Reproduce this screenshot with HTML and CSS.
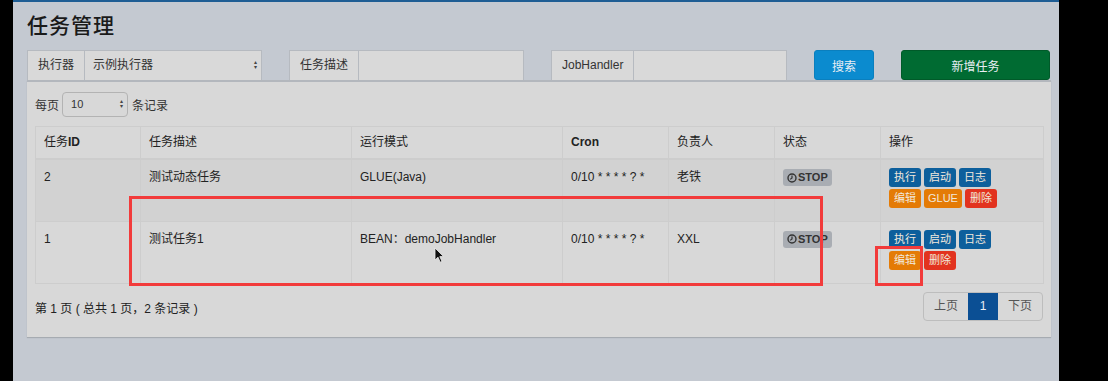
FILE: index.html
```html
<!DOCTYPE html>
<html lang="zh-CN">
<head>
  <meta charset="UTF-8">
  <title>任务管理</title>
  <link rel="stylesheet" href="styles.css">
</head>
<body>
  <div class="side"></div>

  <div class="page">
    <h1 class="page-title">任务管理</h1>

    <div class="filters">
      <div class="input-group">
        <span class="addon">执行器</span>
        <div class="select">示例执行器<span class="caret">&#9652;<br>&#9662;</span></div>
      </div>
      <div class="input-group">
        <span class="addon">任务描述</span>
        <div class="input"></div>
      </div>
      <div class="input-group">
        <span class="addon">JobHandler</span>
        <div class="input"></div>
      </div>
      <button class="btn btn-search">搜索</button>
      <button class="btn btn-add">新增任务</button>
    </div>

    <div class="box">
      <div class="length">
        每页
        <div class="select small">10<span class="caret">&#9652;<br>&#9662;</span></div>
        条记录
      </div>

      <table class="jobs">
        <colgroup>
          <col style="width:105px">
          <col style="width:211px">
          <col style="width:211px">
          <col style="width:106px">
          <col style="width:106px">
          <col style="width:106px">
          <col style="width:163px">
        </colgroup>
        <thead>
          <tr>
            <th>任务<b>ID</b></th>
            <th>任务描述</th>
            <th>运行模式</th>
            <th><b>Cron</b></th>
            <th>负责人</th>
            <th>状态</th>
            <th>操作</th>
          </tr>
        </thead>
        <tbody>
          <tr class="odd">
            <td>2</td>
            <td>测试动态任务</td>
            <td>GLUE(Java)</td>
            <td>0/10 * * * * ? *</td>
            <td>老铁</td>
            <td><span class="label-stop"><svg width="10" height="10" viewBox="0 0 10 10"><circle cx="5" cy="5" r="4" fill="none" stroke="#333" stroke-width="1.4"/><path d="M5 2.6V5L3.2 6.4" fill="none" stroke="#333" stroke-width="1.2"/></svg>STOP</span></td>
            <td>
              <div class="ops">
                <span class="op blue">执行</span><span class="op blue">启动</span><span class="op blue">日志</span>
                <span class="op orange">编辑</span><span class="op orange">GLUE</span><span class="op red">删除</span>
              </div>
            </td>
          </tr>
          <tr>
            <td>1</td>
            <td>测试任务1</td>
            <td>BEAN：demoJobHandler</td>
            <td>0/10 * * * * ? *</td>
            <td>XXL</td>
            <td><span class="label-stop"><svg width="10" height="10" viewBox="0 0 10 10"><circle cx="5" cy="5" r="4" fill="none" stroke="#333" stroke-width="1.4"/><path d="M5 2.6V5L3.2 6.4" fill="none" stroke="#333" stroke-width="1.2"/></svg>STOP</span></td>
            <td>
              <div class="ops">
                <span class="op blue">执行</span><span class="op blue">启动</span><span class="op blue">日志</span>
                <span class="op orange">编辑</span><span class="op red">删除</span>
              </div>
            </td>
          </tr>
        </tbody>
      </table>

      <div class="table-footer">
        <div class="info">第 1 页 ( 总共 1 页，2 条记录 )</div>
        <div class="pager">
          <span class="pg">上页</span><span class="pg active">1</span><span class="pg">下页</span>
        </div>
      </div>
    </div>
  </div>

  <div class="side"></div>

  <!-- annotation marks drawn over the screenshot -->
  <div class="mark mark-row"></div>
  <div class="mark mark-btn"></div>
  <svg class="cursor" width="11" height="17" viewBox="0 0 11 17">
    <path d="M1 1V13L4 10.2L6.2 15.2L8 14.4L5.8 9.6H9.6Z" fill="#111" stroke="#eee" stroke-width="0.8"/>
  </svg>
</body>
</html>
```

FILE: styles.css
```css
body {
  margin: 0;
  position: relative;
  display: flex;
  height: 381px;
  background-color: #000;
  font-family: "Liberation Sans", "Noto Sans CJK SC", sans-serif;
  font-size: 12px;
  color: #222;
  overflow: hidden;
}

.side {
  width: 13px;
  background-color: #000;
}

.side:last-of-type {
  flex: 1;
}

.page {
  width: 1046px;
  background-color: #c4c9d1;
  border-top: 2px solid #1e5d94;
  padding: 0 8px 0 14px;
  box-sizing: border-box;
}

.page-title {
  margin: 10px 0 0;
  height: 38px;
  font-size: 21px;
  font-weight: 500;
  line-height: 28px;
  color: #1a1a1a;
  letter-spacing: 1px;
}

.filters {
  display: grid;
  grid-template-columns: 235px 235px 236px 60px 149px;
  column-gap: 27px;
  height: 30px;
}

.input-group {
  display: flex;
  border: 1px solid #b6bac0;
  border-bottom: none;
  background-color: #d9d9d9;
}

.addon {
  padding: 0 10px;
  line-height: 29px;
  color: #333;
  border-right: 1px solid #b6bac0;
  white-space: nowrap;
}

.input {
  flex: 1;
}

.select {
  flex: 1;
  position: relative;
  padding-left: 8px;
  line-height: 29px;
  color: #333;
  border-radius: 0 4px 0 0;
}

.caret {
  position: absolute;
  right: 4px;
  top: 9px;
  font-size: 6px;
  line-height: 5px;
  color: #444;
}

.btn {
  border: 1px solid transparent;
  border-radius: 3px;
  font-family: inherit;
  font-size: 12px;
  color: #e8eef4;
  padding: 0;
}

.btn-search {
  background-color: #0b8bcf;
  border-color: #0a7fbe;
}

.btn-add {
  background-color: #006b32;
  border-color: #005a29;
}

.box {
  background-color: #d8d8d8;
  border-top: 2px solid #b3b7bd;
  padding: 0 8px;
  height: 257px;
  box-sizing: border-box;
  box-shadow: 0 1px 1px rgba(0, 0, 0, 0.15);
}

.length {
  display: flex;
  align-items: center;
  height: 44px;
  color: #333;
}

.select.small {
  flex: none;
  width: 56px;
  height: 23px;
  margin: 0 4px 0 3px;
  line-height: 23px;
  border: 1px solid #b3b3b3;
  border-radius: 4px;
  font-size: 11px;
}

.select.small .caret {
  top: 6px;
}

.jobs {
  width: 1008px;
  border-collapse: collapse;
  table-layout: fixed;
}

.jobs th,
.jobs td {
  border: 1px solid #cdcdcd;
  padding: 0 8px;
  text-align: left;
  vertical-align: top;
}

.jobs th {
  height: 31px;
  line-height: 31px;
  font-weight: normal;
  border-bottom-width: 2px;
}

.jobs td {
  height: 62px;
  padding-top: 10px;
  box-sizing: border-box;
  line-height: 15px;
}

.jobs tr.odd td {
  background-color: #d2d2d2;
}

.label-stop {
  display: inline-flex;
  align-items: center;
  gap: 1px;
  padding: 1px 4px;
  margin-top: -1px;
  background-color: #a9adb3;
  border-radius: 3px;
  font-size: 11px;
  font-weight: bold;
  color: #333;
}

.jobs td:last-child {
  padding-top: 8px;
}

.ops {
  display: flex;
  flex-wrap: wrap;
  gap: 2px 3px;
  width: 115px;
}

.op {
  display: inline-block;
  min-width: 24px;
  padding: 0 4px;
  height: 19px;
  line-height: 19px;
  text-align: center;
  border-radius: 3px;
  font-size: 11px;
  color: #f1e8dc;
}

.op.blue {
  background-color: #0d5f9c;
}

.op.orange {
  background-color: #e47b06;
}

.op.red {
  background-color: #e2331f;
}

.table-footer {
  display: flex;
  justify-content: space-between;
  align-items: flex-start;
  padding-top: 8px;
}

.info {
  margin-top: 7px;
  color: #222;
}

.pager {
  display: flex;
  border: 1px solid #bdbdbd;
  border-radius: 4px;
  overflow: hidden;
}

.pg {
  width: 44px;
  height: 27px;
  line-height: 27px;
  text-align: center;
  color: #555;
}

.pg.active {
  width: 30px;
  background-color: #0b4f94;
  color: #e8eef4;
}

.mark {
  position: absolute;
  border: 3px solid #f23b3b;
  box-sizing: border-box;
}

.mark-row {
  left: 129px;
  top: 196px;
  width: 694px;
  height: 90px;
}

.mark-btn {
  left: 875px;
  top: 246px;
  width: 48px;
  height: 40px;
}

.cursor {
  position: absolute;
  left: 434px;
  top: 247px;
}
```
